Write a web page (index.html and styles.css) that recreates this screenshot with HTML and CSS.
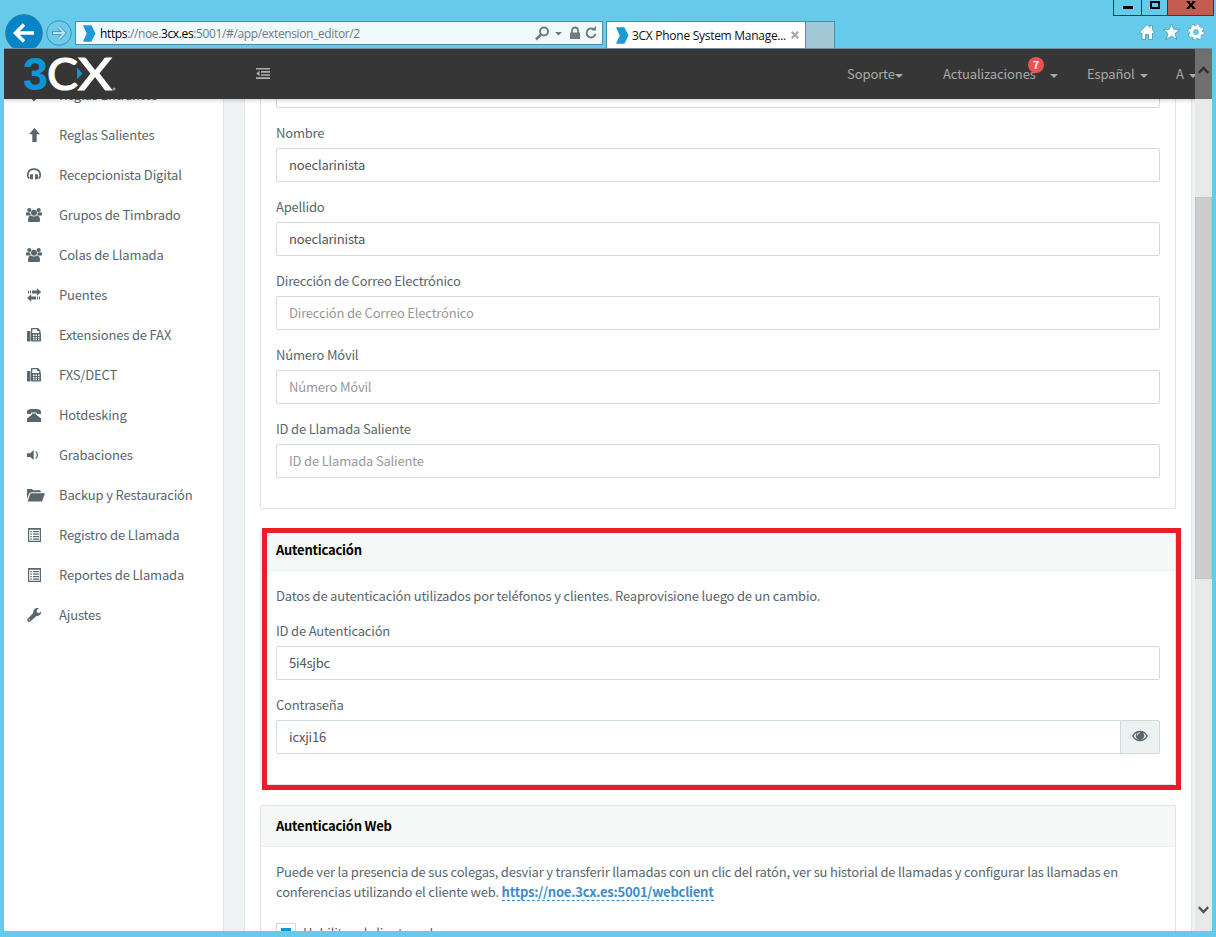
FILE: index.html
```
<!DOCTYPE html>
<html lang="es">
<head>
<meta charset="utf-8">
<title>3CX Phone System Management Console</title>
<link rel="stylesheet" href="styles.css">
</head>
<body>
<svg class="defs" aria-hidden="true">
  <symbol id="i-down" viewBox="0 0 18 18"><path d="M6.5 2h5v7H15l-6 6.500L3 9h3.500z"/></symbol>
  <symbol id="i-up" viewBox="0 0 18 18"><path d="M9.500 2 15 8.200H11.700V16H7.300V8.200H4z"/></symbol>
  <symbol id="i-head" viewBox="0 0 18 18"><path d="M4.300 12.500C1.500 9.500 2.500 3.200 9 3.200s7.500 6.300 4.700 9.300" fill="none" stroke="currentColor" stroke-width="1.700"/><path d="M5 8.500l3-.5v5.500l-3-.5zM13 8.500l-3-.5v5.500l3-.5z"/></symbol>
  <symbol id="i-users" viewBox="0 0 18 18"><circle cx="4.300" cy="4" r="2.100"/><circle cx="13.700" cy="4" r="2.100"/><path d="M1 9.500V7.700C1 6 2.500 6 4.300 6.500c.9.400 1.500.9 1.100 3zM17 9.500V7.700c0-1.700-1.500-1.700-3.300-1.200-.9.400-1.500.9-1.100 3z"/><circle cx="9" cy="6.800" r="3"/><path d="M3 14.500c0-3.500 1-5 3-5 1.800 1.200 4.200 1.200 6 0 2 0 3 1.500 3 5 0 1-.7 1.500-1.600 1.500H4.600C3.700 16 3 15.500 3 14.500z"/></symbol>
  <symbol id="i-swap" viewBox="0 0 18 18"><path d="M3 4.500h1v3H3zM5 4.500h1v3H5zM7 4.500h5V2.300L16.200 6 12 9.700V7.500H7zM15 10.500h-1v3h1zM13 10.500h-1v3h1zM11 10.500H6.200V8.300L2 12l4.200 3.700v-2.200H11z"/></symbol>
  <symbol id="i-fax" viewBox="0 0 18 18"><path fill-rule="evenodd" d="M2 6c0-.7.300-1 1-1h1.500c.7 0 1 .3 1 1v8.500c0 .7-.3 1-1 1H3c-.7 0-1-.3-1-1zM6 2h7l2.500 2.500V7c.4.200.5.500.5 1v6.500c0 .7-.3 1-1 1H7c-.7 0-1-.3-1-1zm1.200 1.200V7h7V5H12V3.200zM8 8.500V10h1.500V8.500zm2.500 0V10H12V8.500zm2.500 0V10h1.500V8.500zM8 11v1.200h1.500V11zm2.500 0v1.200H12V11zm2.500 0v1.200h1.500V11zm-5 2.200v1h1.500v-1zm2.500 0v1H12v-1zm2.500 0v1h1.500v-1z"/></symbol>
  <symbol id="i-phone" viewBox="0 0 18 18"><path d="M2 6.500C2 3 5 3 9 3s7 0 7 3.500V8h-4V6.500H6V8H2zM7 7.500h4v1l5 4v3.500H2v-3.500l5-4z"/></symbol>
  <symbol id="i-sound" viewBox="0 0 18 18"><path d="M2 7.200h3.200L8.700 4v10L5.200 11H2z"/><path d="M10.500 5.500c2.500 1 2.500 6 0 7" fill="none" stroke="currentColor" stroke-width="1.300"/></symbol>
  <symbol id="i-folder" viewBox="0 0 18 18"><path d="M2 4c0-.7.300-1 1-1h4l1 1.200h6.500c.8 0 1.200.3 1.200 1.300v.8H6.500C5 6.300 4.500 7 4 8L2 13z"/><path d="M6.500 7.300H20L17 15.500H2.600L5 8.500c.3-.8.700-1.200 1.500-1.200z"/></symbol>
  <symbol id="i-list" viewBox="0 0 18 18"><path fill-rule="evenodd" d="M3 2h13v14H3zm1.200 1.800v11h10.600v-11z"/><path d="M5.300 5h1.500v1.300H5.300zm2.600 0h6v1.300h-6zM5.300 7.500h1.500v1.300H5.300zm2.600 0h6v1.300h-6zM5.300 10h1.500v1.300H5.300zm2.600 0h6v1.300h-6zM5.300 12.500h1.500v1.300H5.300zm2.600 0h6v1.300h-6z"/></symbol>
  <symbol id="i-wrench" viewBox="0 0 18 18"><path fill-rule="evenodd" d="M8.200 7C8 4 10 2 12.500 2l1.700.4L11.700 4l.2 2.200 2 1L16 5.500c.5 2.500-1.500 4.500-4.500 4.500L5 15.700c-1 .9-3.600-1-2.600-2.700zM4 13.200v1h1v-1z"/></symbol>
  <symbol id="i-fav" viewBox="0 0 14 18"><path d="M0 0h9l4.500 9L9 18H0l4-9z" fill="#1b9ad6"/></symbol>
</svg>

<div class="window">
  <div class="titlebar">
    <span class="win-btn min"><i></i></span><span class="win-btn max"><i></i></span><span class="win-btn close"><svg viewBox="0 0 10 8"><path d="M1.800.5 8.200 7.500M8.200.5 1.800 7.500" stroke="#000" stroke-width="2.200"/><path d="M.5 0h3v1h-3zM6.500 0h3v1h-3zM.5 7h3v1h-3zM6.500 7h3v1h-3z"/></svg></span>
  </div>
  <div class="toolbar">
    <svg class="back" viewBox="0 0 38 38"><circle cx="19" cy="19" r="18.300" fill="#0584c6" stroke="#35799f"/><path d="M29 19H11M19 10.500 10.500 19 19 27.500" fill="none" stroke="#fff" stroke-width="3.600"/></svg>
    <svg class="forward" viewBox="0 0 26 26"><circle cx="13" cy="13" r="12.300" fill="#6fcbea" stroke="#3e91b0"/><path d="M6 13h12M13 7.500 18.500 13 13 18.500" fill="none" stroke="#3e91b0" stroke-width="3.600"/><path d="M7 13h11M13 7.500 18.500 13 13 18.500" fill="none" stroke="#b4e6f7" stroke-width="1.900"/></svg>
    <div class="address">
      <svg class="fav"><use href="#i-fav"/></svg>
      <span class="url"><b>https</b>://noe.<b>3cx.es</b>:5001/#/app/extension_editor/2</span>
      <svg class="tools" viewBox="0 0 64 16"><g fill="none" stroke="#737b7e"><circle cx="9" cy="6.500" r="4" stroke-width="2"/><path d="M6 9.500 1 14.500" stroke-width="2.500"/><path d="M37 8V5.500a3 3 0 0 1 6 0V8" stroke-width="1.800"/><path d="M59 4.500A4.500 4.500 0 1 0 60.500 9" stroke-width="2"/></g><g fill="#737b7e"><path d="M20 7h7l-3.500 3.500zM35 7.500h10V14H35zM56.500 5.500H61V.8z"/></g></svg>
    </div>
    <div class="tab"><svg class="fav"><use href="#i-fav"/></svg><span>3CX Phone System Manage...</span><svg class="x" viewBox="0 0 8 8"><path d="M.7.700l6.600 6.600M7.300.700.7 7.300" stroke="#a5a5a5" stroke-width="2"/></svg></div>
    <div class="newtab"></div>
    <svg class="actions" viewBox="0 0 66 18"><g fill="#fff" stroke="#4b93ae" stroke-width=".8"><path d="M8 1.500 11 4.500V2.500h2.500v4.300L15.500 9 14 10.500l-.5-.5V16.500H9.500v-5h-3v5H3V10l-.8.500L.7 9z"/><path d="m32.500.8 2.200 5.500 6 .3-4.700 3.900 1.700 6-5.200-3.400-5.200 3.400 1.700-6L24.300 6.600l6-.3z"/></g><circle cx="57" cy="9" r="6.500" fill="none" stroke="#4b93ae" stroke-width="3.600" stroke-dasharray="3.100 2"/><circle cx="57" cy="9" r="4.500" fill="none" stroke="#fff" stroke-width="3"/><circle cx="57" cy="9" r="6.500" fill="none" stroke="#fff" stroke-width="2.600" stroke-dasharray="2.500 2.600"/></svg>
  </div>

  <div class="page">
    <header class="header">
      <svg class="logo" viewBox="0 0 96 40">
        <text x="0" y="36" class="logo-three" textLength="25" lengthAdjust="spacingAndGlyphs">3</text>
        <text x="24" y="36" class="logo-cx" textLength="31" lengthAdjust="spacingAndGlyphs">C</text>
        <text x="55" y="36" class="logo-cx" textLength="34" lengthAdjust="spacingAndGlyphs">X</text>
        <path d="M54 13.500 59.500 19.500 54 25.500z" fill="#0a96d7"/><circle cx="91" cy="35" r="1.500" fill="#999"/>
      </svg>
      <svg class="burger" viewBox="0 0 14 11"><path d="M0 0h14v1.600H0zM5 3.100h9v1.600H5zM5 6.200h9v1.600H5zM0 9.300h14V11H0zM3.500 2.800v5.500L.3 5.500z" fill="#b0b0b0"/></svg>
      <nav class="menu">
        <span class="m1">Soporte<i class="caret"></i></span>
        <span class="m2">Actualizaciones<b class="badge">7</b><i class="caret"></i></span>
        <span class="m3">Español<i class="caret"></i></span>
        <span class="m4">A<i class="caret"></i></span>
      </nav>
    </header>
    <div class="body">
      <aside class="sidebar">
        <ul>
          <li><svg><use href="#i-down"/></svg>Reglas Entrantes</li>
          <li><svg><use href="#i-up"/></svg>Reglas Salientes</li>
          <li><svg><use href="#i-head"/></svg>Recepcionista Digital</li>
          <li><svg><use href="#i-users"/></svg>Grupos de Timbrado</li>
          <li><svg><use href="#i-users"/></svg>Colas de Llamada</li>
          <li><svg><use href="#i-swap"/></svg>Puentes</li>
          <li><svg><use href="#i-fax"/></svg>Extensiones de FAX</li>
          <li><svg><use href="#i-fax"/></svg>FXS/DECT</li>
          <li><svg><use href="#i-phone"/></svg>Hotdesking</li>
          <li><svg><use href="#i-sound"/></svg>Grabaciones</li>
          <li><svg><use href="#i-folder"/></svg>Backup y Restauración</li>
          <li><svg><use href="#i-list"/></svg>Registro de Llamada</li>
          <li><svg><use href="#i-list"/></svg>Reportes de Llamada</li>
          <li><svg><use href="#i-wrench"/></svg>Ajustes</li>
        </ul>
      </aside>
      <main class="content">
        <section class="card card-first">
          <div class="field"><div class="input"></div></div>
          <div class="field"><label>Nombre</label><div class="input">noeclarinista</div></div>
          <div class="field"><label>Apellido</label><div class="input">noeclarinista</div></div>
          <div class="field"><label>Dirección de Correo Electrónico</label><div class="input hint">Dirección de Correo Electrónico</div></div>
          <div class="field"><label>Número Móvil</label><div class="input hint">Número Móvil</div></div>
          <div class="field"><label>ID de Llamada Saliente</label><div class="input hint">ID de Llamada Saliente</div></div>
        </section>
        <section class="card marked">
          <h2>Autenticación</h2>
          <div class="card-body">
            <p>Datos de autenticación utilizados por teléfonos y clientes. Reaprovisione luego de un cambio.</p>
            <div class="field"><label>ID de Autenticación</label><div class="input">5i4sjbc</div></div>
            <div class="field"><label>Contraseña</label>
              <div class="group"><div class="input">icxji16</div><div class="addon"><svg viewBox="0 0 16 12"><path fill-rule="evenodd" d="M0 6C3.500-1 12.500-1 16 6 12.500 13 3.500 13 0 6zm1.500 0c3 5 10 5 13 0-.9-1.500-2-2.500-3.200-3.100C13.500 6.500 11.500 9.700 8 9.700S2.500 6.500 4.700 2.900C3.500 3.500 2.400 4.500 1.500 6zM8 2.300v1C6.700 3.300 5.900 4.100 5.900 5.400h-.8C5.100 3.500 6.300 2.300 8 2.300z" fill="#58666e"/></svg></div></div>
            </div>
          </div>
        </section>
        <section class="card">
          <h2>Autenticación Web</h2>
          <div class="card-body">
            <p>Puede ver la presencia de sus colegas, desviar y transferir llamadas con un clic del ratón, ver su historial de llamadas y configurar las llamadas en<br>conferencias utilizando el cliente web. <a>https://noe.3cx.es:5001/webclient</a></p>
            <div class="check"><i></i><span>Habilitar el cliente web</span></div>
          </div>
        </section>
      </main>
      <div class="gutter"></div>
    </div>
    <div class="scrollbar">
      <svg viewBox="0 0 11 8"><path d="M.8 6.800 5.500 2l4.700 4.800" fill="none" stroke="#2f2f2f" stroke-width="2.400"/></svg>
      <div class="thumb"></div>
      <svg viewBox="0 0 11 8"><path d="M.8 1.200 5.500 6l4.700-4.800" fill="none" stroke="#505050" stroke-width="2.400"/></svg>
    </div>
  </div>
</div>
</body>
</html>
```
FILE: styles.css
```
*, *::after { box-sizing: border-box; }
body { margin: 0; font: 13px/20px "Noto Sans CJK SC", sans-serif; letter-spacing: -.19px; color: #58666e; overflow: hidden; }
.defs { display: none; }
svg { display: block; flex: none; }
.window { width: 1216px; height: 937px; background: #66caea; overflow: hidden; }

.titlebar { height: 16px; display: flex; justify-content: flex-end; padding-right: 2px; }
.win-btn { height: 16px; border: 1px solid #20414d; border-top: 0; display: flex; justify-content: center; }
.min { width: 29px; }
.max { width: 26px; border-left: 0; }
.close { width: 46px; border-left: 0; background: #c45b50; }
.close svg { width: 10px; height: 8px; margin-top: 1px; }
.min i { width: 10px; height: 3px; background: #000; margin-top: 6px; }
.max i { width: 10px; height: 8px; border: 2px solid #000; margin-top: 1px; }

.toolbar { height: 33px; display: flex; align-items: flex-start; padding-left: 5px; font: 12px/22px "Open Sans", sans-serif; }
.back { width: 38px; height: 38px; margin-top: -2px; }
.forward { width: 26px; height: 26px; margin: 4px 3px 0; }
.address { width: 528px; height: 24px; margin-top: 5px; border: 1px solid #468fa9; background: #f0fafd; display: flex; align-items: center; padding: 0 3px 0 7px; }
.fav { width: 13px; height: 17px; }
.url { flex: 1; margin: 1px 0 0 4px; color: #73797c; letter-spacing: -.37px; }
.url b { font-weight: 400; color: #000; }
.tools { width: 64px; height: 16px; }
.tab { width: 200px; height: 27px; margin: 5px 0 0 3px; border: 1px solid #468fa9; border-bottom: 0; background: #fff; color: #111; display: flex; align-items: center; padding: 0 0 0 9px; white-space: nowrap; }
.tab span { width: 156px; margin: 2px 3px 0 3px; letter-spacing: -.28px; }
.x { width: 8px; height: 8px; }
.newtab { width: 29px; height: 27px; margin-top: 5px; border: 1px solid #468fa9; border-width: 1px 1px 0 0; background: #a2c8d5; }
.actions { width: 66px; height: 18px; margin: 7px 0 0 304px; }

.page { position: relative; width: 1208px; height: 883px; margin: -1px 0 0 4px; background: #fff; overflow: hidden; display: flex; flex-direction: column; }
.header { height: 51px; flex: none; background: #363636; display: flex; box-shadow: 0 2px 3px rgba(0,0,0,.15); z-index: 1; border-top: 1px solid #6c93ab; color: #a9a9a9; }
.logo { width: 96px; height: 40px; margin: 5px 0 0 19px; overflow: visible; }
.logo-three { font: bold 47px "Liberation Sans", sans-serif; fill: #0a96d7; letter-spacing: 0; }
.logo-cx { font: 45px Lato, sans-serif; fill: #fff; stroke: #fff; stroke-width: 1.200; letter-spacing: 0; }
.burger { width: 14px; height: 11px; margin: 19px 0 0 137px; }
.menu { flex: 1; display: flex; padding-top: 15px; margin-left: 577px; }
.menu span { display: flex; align-items: center; height: 20px; flex: none; position: relative; letter-spacing: -.1px; }
.m1 { width: 96px; } .m2 { width: 144px; } .m3 { width: 89px; }
.caret { border: 4px solid transparent; border-top-color: #a9a9a9; border-bottom: 0; margin-top: 3px; }
.m2 .caret { margin-left: 14px; }
.m3 .caret, .m4 .caret { margin-left: 5px; }
.badge { position: absolute; left: 85px; top: -7px; width: 16px; height: 16px; border-radius: 8px; background: #f05050; color: #fff; font-size: 11px; line-height: 15px; text-align: center; }

.body { flex: 1; min-height: 0; display: flex; overflow: hidden; }
.sidebar { width: 220px; border-right: 1px solid #dee5e7; }
.sidebar ul { list-style: none; margin: -24px 0 0; padding: 0; }
.sidebar li { height: 40px; display: flex; align-items: center; padding-left: 21px; white-space: nowrap; letter-spacing: -.16px; }
.sidebar li svg { width: 18px; height: 18px; margin-right: 16px; fill: currentColor; overflow: visible; }
#i-folder { overflow: visible; }
.content { width: 967px; border-left: 20px solid #eef2f4; padding: 0 15px 0 16px; box-shadow: inset 1px 0 #dee5e7; height: 832px; overflow: hidden; }
.gutter { width: 21px; background: #eef2f4; border-left: 1px solid #dee5e7; }
.card { width: 916px; border: 1px solid #dee5e7; border-radius: 2px; margin-bottom: 20px; }
.card-first { border-top: 0; padding: 0 15px 15px; margin-top: -25px; }
.card h2 { margin: 0; height: 41px; padding: 10px 15px; font-size: 13px; line-height: 20px; letter-spacing: -.23px; color: #000; background: #f6f8f8; border-bottom: 1px solid #edf1f2; }
.card-body { padding: 15px; }
.marked { position: relative; }
.marked::after { content: ""; position: absolute; left: 1px; top: -2px; width: 919px; height: 262px; border: 5px solid #ed1c24; }
p { margin: 0 0 15px; white-space: nowrap; }
.field { margin-bottom: 15px; }
label { display: block; height: 20px; margin-bottom: 5px; }
.input { height: 34px; border: 1px solid #cfdadd; border-radius: 2px; padding: 6px 12px; color: #555; background: #fff; flex: 1; }
.hint { color: #999; }
.group { display: flex; }
.group .input { border-radius: 2px 0 0 2px; }
.addon { width: 40px; border: 1px solid #cfdadd; margin-left: -1px; width: 40px; background: #edf1f2; display: flex; align-items: center; justify-content: center; border-radius: 0 2px 2px 0; }
.addon svg { width: 16px; height: 12px; margin-top: -2px; }
a { color: #428bca; font-weight: 700; letter-spacing: -.22px; border-bottom: 1px dashed #428bca; display: inline-block; height: 19px; }
.check { display: flex; gap: 7px; padding-top: 6px; }
.check i { width: 20px; height: 20px; border: 1px solid #cfdadd; padding: 4px; background: #0a96d7 content-box; }

.scrollbar { position: absolute; right: 0; top: 1px; width: 17px; height: 882px; background: linear-gradient(#6f6f6f 50px, #e8e9eb 50px); z-index: 2; display: flex; flex-direction: column; align-items: center; padding: 17px 0; }
.scrollbar svg { width: 11px; height: 8px; }
.thumb { width: 17px; height: 382px; background: #cdcdcd; border: 1px solid #c2c2c2; margin: 123px 0 auto; }
```
